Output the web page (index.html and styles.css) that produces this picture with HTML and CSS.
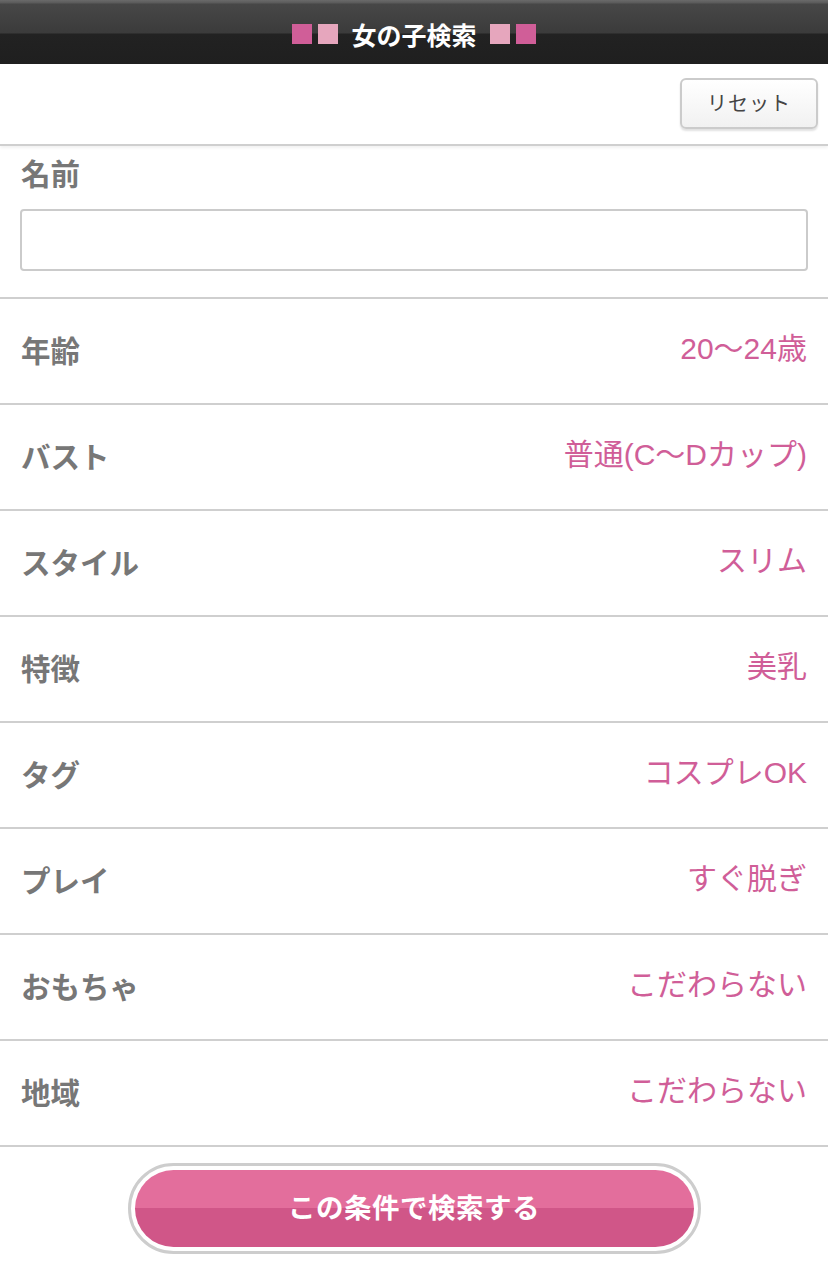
FILE: index.html
```html
<!DOCTYPE html>
<html lang="ja">
<head>
<meta charset="utf-8">
<title>女の子検索</title>
<link rel="stylesheet" href="styles.css">
</head>
<body>
<header class="topbar">
  <h1 class="title">
    <span class="sq sq-dark"></span><span class="sq sq-light"></span>
    <span class="title-text">女の子検索</span>
    <span class="sq sq-light"></span><span class="sq sq-dark"></span>
  </h1>
</header>
<div class="resetbar">
  <button class="reset" type="button">リセット</button>
</div>
<section class="name-section">
  <label class="label" for="name">名前</label>
  <input class="name-input" id="name" type="text">
</section>
<ul class="rows">
  <li class="row"><span class="label">年齢</span><span class="value">20〜24歳</span></li>
  <li class="row"><span class="label">バスト</span><span class="value">普通(C〜Dカップ)</span></li>
  <li class="row"><span class="label">スタイル</span><span class="value">スリム</span></li>
  <li class="row"><span class="label">特徴</span><span class="value">美乳</span></li>
  <li class="row"><span class="label">タグ</span><span class="value">コスプレOK</span></li>
  <li class="row"><span class="label">プレイ</span><span class="value">すぐ脱ぎ</span></li>
  <li class="row"><span class="label">おもちゃ</span><span class="value">こだわらない</span></li>
  <li class="row"><span class="label">地域</span><span class="value">こだわらない</span></li>
</ul>
<div class="submit-area">
  <div class="submit-ring">
    <button class="submit" type="button">この条件で検索する</button>
  </div>
</div>
</body>
</html>
```

FILE: styles.css
```css
* { box-sizing: border-box; }
html, body {
  margin: 0;
  padding: 0;
  background: #fff;
  font-family: "Noto Sans CJK JP", "Noto Sans", "Liberation Sans", sans-serif;
}
.topbar {
  height: 64px;
  background: linear-gradient(to bottom, #6a6a6a 0px, #5a5a5a 3px, #474747 4px, #3b3b3b 33px, #222 34px, #1f1f1f 64px);
  display: flex;
  align-items: center;
  justify-content: center;
}
.title {
  margin: 0;
  display: flex;
  align-items: center;
  gap: 6px;
  color: #fff;
  font-size: 25px;
  font-weight: 700;
  line-height: 1;
  padding-top: 4px;
}
.title-text { margin: 0 7px; }
.sq { width: 20px; height: 20px; display: block; }
.sq-dark { background: #d05e98; }
.sq-light { background: #e6a6bd; }

.resetbar {
  height: 82px;
  display: flex;
  justify-content: flex-end;
  align-items: flex-start;
  padding: 14px 10px 0 0;
  border-bottom: 2px solid #cfcfcf;
  box-shadow: 0 2px 3px rgba(0,0,0,0.06);
  position: relative;
}
.reset {
  width: 138px;
  height: 51px;
  border: 2px solid #cbcbcb;
  border-radius: 6px;
  background: linear-gradient(to bottom, #ffffff, #f1f1f1);
  box-shadow: 0 2px 2px rgba(0,0,0,0.12);
  font-family: "Noto Sans CJK JP", sans-serif;
  font-size: 20px;
  color: #444;
  letter-spacing: 1px;
  padding: 0 0 2px 0;
}

.name-section {
  display: flex;
  flex-direction: column;
  padding: 8px 20px 26px 20px;
  border-bottom: 2px solid #cfcfcf;
}
.label {
  color: #777;
  font-size: 29.5px;
  font-weight: 700;
  line-height: 36px;
  padding-left: 1px;
}
.name-input {
  margin-top: 19px;
  height: 62px;
  border: 2px solid #cbcbcb;
  border-radius: 4px;
  width: 100%;
  font-size: 24px;
  background: #fff;
}

.rows {
  list-style: none;
  margin: 0;
  padding: 0;
}
.row {
  height: 106px;
  border-bottom: 2px solid #cfcfcf;
  display: flex;
  justify-content: space-between;
  align-items: center;
  padding: 0 21px 5px 20px;
}
.value {
  color: #d05e98;
  font-family: "Liberation Sans", "Noto Sans CJK JP", sans-serif;
  font-size: 30px;
  font-weight: 400;
  line-height: 36px;
}

.submit-area {
  display: flex;
  justify-content: center;
  padding-top: 16px;
}
.submit-ring {
  width: 573px;
  height: 91px;
  border: 3px solid #cdcdcd;
  border-radius: 46px;
  padding: 4px;
  background: #fff;
}
.submit {
  width: 100%;
  height: 100%;
  border: none;
  border-radius: 40px;
  background: linear-gradient(to bottom, #e36e9c 0%, #e36e9c 50%, #d05688 50%, #d05688 100%);
  color: #fff;
  font-family: "Noto Sans CJK JP", sans-serif;
  font-size: 27.5px;
  font-weight: 700;
  letter-spacing: 0.5px;
  padding: 0 0 5px 0;
}
```
